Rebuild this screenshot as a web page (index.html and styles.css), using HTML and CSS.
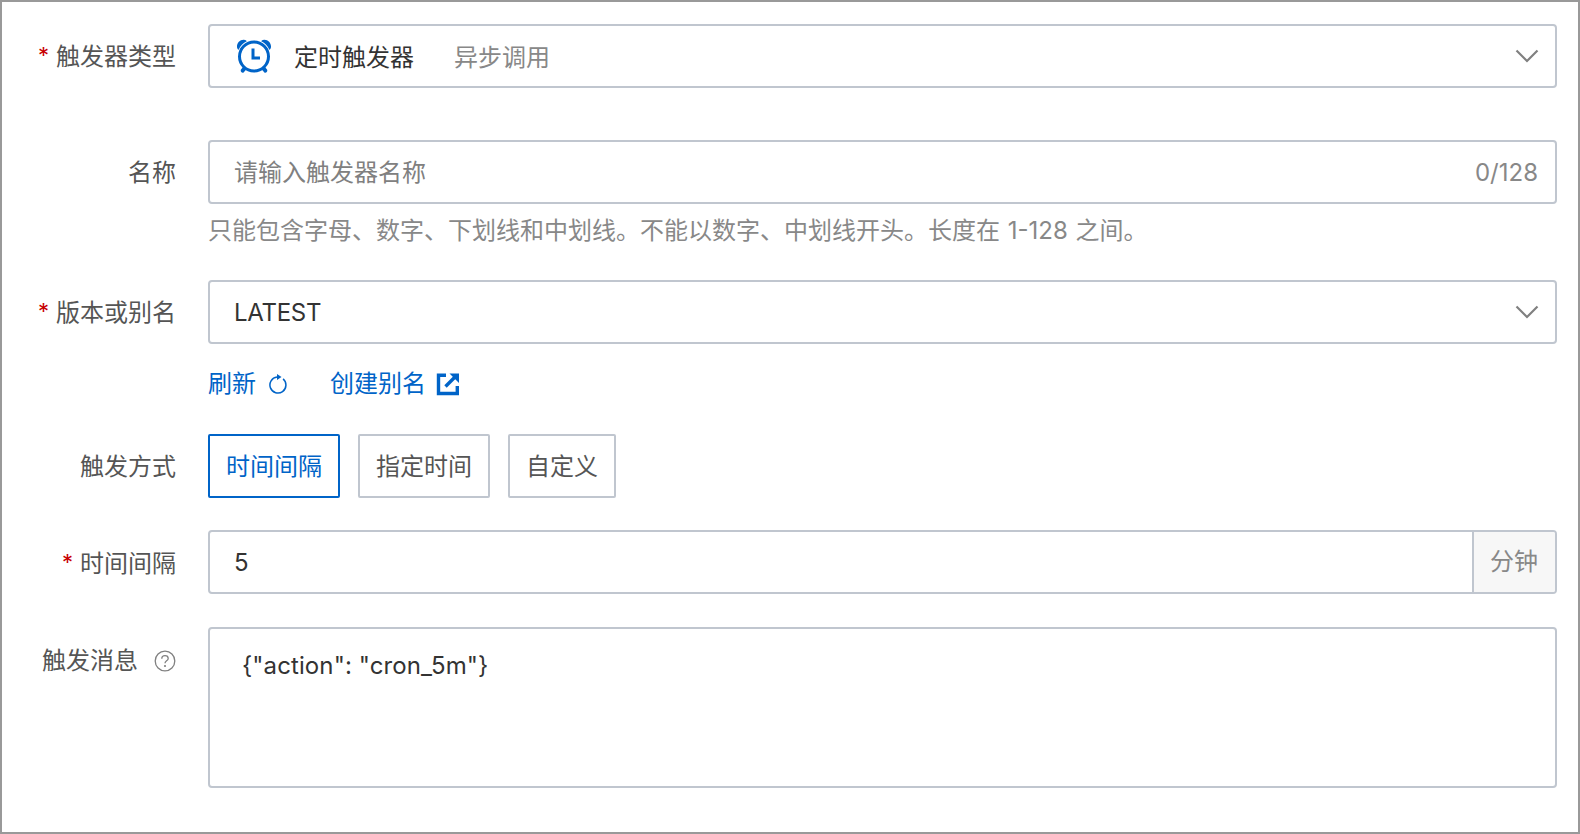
FILE: index.html
```html
<!DOCTYPE html>
<html lang="zh-CN">
<head>
<meta charset="utf-8">
<title>触发器</title>
<link rel="stylesheet" href="styles.css">
</head>
<body>
<form class="form">
  <div class="row row-type">
    <div class="label"><span class="req">*</span>触发器类型</div>
    <div class="field">
      <div class="control select">
        <svg class="clock" viewBox="0 0 36 36" width="36" height="36" aria-hidden="true">
          <path class="fill" d="M1 9C.7 5 4 1.500 8 1.800c1.400.1 2.400.8 2.800 1.500C7 5 4.200 7.800 2.700 11.800 1.800 11.400 1.100 10.400 1 9zM35 9C35.300 5 32 1.500 28 1.800c-1.400.1-2.400.8-2.800 1.500C29 5 31.800 7.800 33.300 11.800c.9-.4 1.600-1.400 1.700-2.800z"/>
          <circle class="ring" cx="18" cy="18.500" r="14.500"/>
          <path class="fill" d="M7 29l3 2.800-2.400 2.600c-.9.600-2 0-2.500-.7-.5-.8-.6-1.700.1-2.500zM29 29l-3 2.800 2.400 2.600c.9.600 2 0 2.500-.7.500-.8.600-1.700-.1-2.500z"/>
          <path class="hand" d="M17 10.500v9.500h7"/>
        </svg>
        <span class="opt-name">定时触发器</span>
        <span class="opt-tag">异步调用</span>
        <svg class="chevron" viewBox="0 0 24 14" width="24" height="14" aria-hidden="true"><path d="M1.500 1.500L12 12 22.500 1.500"/></svg>
      </div>
    </div>
  </div>

  <div class="row row-name">
    <div class="label">名称</div>
    <div class="field">
      <div class="control input">
        <span class="placeholder">请输入触发器名称</span>
        <span class="count">0/128</span>
      </div>
      <div class="help">只能包含字母、数字、下划线和中划线。不能以数字、中划线开头。长度在 1-128 之间。</div>
    </div>
  </div>

  <div class="row row-version">
    <div class="label"><span class="req">*</span>版本或别名</div>
    <div class="field">
      <div class="control select">
        <span class="value">LATEST</span>
        <svg class="chevron" viewBox="0 0 24 14" width="24" height="14" aria-hidden="true"><path d="M1.500 1.500L12 12 22.500 1.500"/></svg>
      </div>
      <div class="links">
        <a class="link">刷新
          <svg class="refresh" viewBox="0 0 18 20" width="18" height="20" aria-hidden="true">
            <path class="line" d="M14.100 4.900A8 8 0 1 1 8 3.060"/>
            <path class="solid" d="M8 0L12.500 3 8 6z"/>
          </svg>
        </a>
        <a class="link">创建别名
          <svg class="external" viewBox="0 0 24 24" width="24" height="24" aria-hidden="true">
            <path class="box" d="M10 3.200H2.500v18.300h18.800V14"/>
            <path class="box" d="M9.500 14.500L20 4"/>
            <path class="solid" d="M13.500 1.500H23v9.500z"/>
          </svg>
        </a>
      </div>
    </div>
  </div>

  <div class="row row-mode">
    <div class="label">触发方式</div>
    <div class="field tabs">
      <button type="button" class="tab tab-on">时间间隔</button>
      <button type="button" class="tab">指定时间</button>
      <button type="button" class="tab">自定义</button>
    </div>
  </div>

  <div class="row row-interval">
    <div class="label"><span class="req">*</span>时间间隔</div>
    <div class="field">
      <div class="control input">
        <span class="value">5</span>
        <span class="addon">分钟</span>
      </div>
    </div>
  </div>

  <div class="row">
    <div class="label label-msg">触发消息
      <svg class="help-icon" viewBox="0 0 22 22" width="22" height="22" aria-hidden="true">
        <circle cx="11" cy="11" r="9.800"/>
        <path d="M7.800 8.700c0-1.900 1.400-3.100 3.200-3.100s3.200 1.100 3.200 2.800c0 2.500-3.200 2.400-3.200 4.900"/>
        <circle class="dot" cx="11" cy="16" r="1.100"/>
      </svg>
    </div>
    <div class="field">
      <div class="control textarea">{"action": "cron_5m"}</div>
    </div>
  </div>
</form>
</body>
</html>
```

FILE: styles.css
```css
* { box-sizing: border-box; }
html, body { margin: 0; height: 100%; background: #fff; }
body { font-family: Inter, "Noto Sans CJK SC", sans-serif; font-size: 24px; color: #333; }

.form {
  height: 834px;
  border: 2px solid #999;
  padding: 22px 21px 0 0;
  display: flex;
  flex-direction: column;
}
.row { display: flex; align-items: flex-start; }
.row-type { margin-bottom: 52px; }
.row-name { margin-bottom: 32px; }
.row-version { margin-bottom: 33px; }
.row-mode { margin-bottom: 32px; }
.row-interval { margin-bottom: 33px; }

.label {
  width: 174px;
  flex: none;
  height: 64px;
  line-height: 66px;
  text-align: right;
  color: #555;
  white-space: nowrap;
}
.row-interval .label { line-height: 68px; }
.label-msg { display: flex; justify-content: flex-end; align-items: flex-start; line-height: 68px; gap: 16px; }
.req { color: #c80000; margin-right: 7px; font-size: 22px; position: relative; top: -2px; }
.field { margin-left: 32px; flex: 1; min-width: 0; }

.control {
  height: 64px;
  border: 2px solid #c0c6cf;
  border-radius: 4px;
  background: #fff;
  display: flex;
  align-items: center;
  padding-left: 24px;
  line-height: 1;
}
.select { padding-right: 16px; }
.input { padding-right: 17px; }
.clock { margin-left: 2px; margin-right: 22px; flex: none; }
.clock .fill { fill: #0064c8; }
.clock .ring { fill: none; stroke: #0064c8; stroke-width: 3; }
.clock .hand { fill: none; stroke: #0064c8; stroke-width: 3; }
.opt-name { color: #333; margin-top: 4px; }
.opt-tag { color: #888; margin-left: 40px; margin-top: 4px; }
.chevron { margin-left: auto; flex: none; }
.chevron path { fill: none; stroke: #808080; stroke-width: 2.200; }
.placeholder { color: #808080; margin-top: 2px; }
.count { margin-left: auto; color: #888; margin-top: 2px; }
.value { color: #333; margin-top: 2px; letter-spacing: -0.3px; }

.help { color: #888; line-height: 34px; margin-top: 10px; white-space: nowrap; word-spacing: 1px; }
.links { display: flex; gap: 43px; margin-top: 23px; line-height: 34px; }
.link { color: #0064c8; display: flex; align-items: center; gap: 13px; }
.link:last-child { gap: 10px; }
.refresh .line { fill: none; stroke: #0064c8; stroke-width: 1.500; }
.refresh .solid { fill: #0064c8; }
.external .box { fill: none; stroke: #0064c8; stroke-width: 3.400; }
.external .solid { fill: #0064c8; }

.tabs { display: flex; gap: 18px; }
.tab {
  height: 64px;
  padding: 0 16px 3px;
  border: 2px solid #c0c6cf;
  border-radius: 2px;
  background: #fff;
  color: #555;
  font: inherit;
}
.tab-on { border-color: #0064c8; color: #0064c8; }

.row-interval .input { padding-right: 0; overflow: hidden; }
.addon {
  margin-left: auto;
  width: 83px;
  height: 100%;
  padding-right: 1px;
  background: #f7f7f7;
  border-left: 2px solid #c0c6cf;
  color: #888;
  display: flex;
  align-items: center;
  justify-content: center;
}

.help-icon { margin-top: 23px; flex: none; }
.help-icon circle, .help-icon path { fill: none; stroke: #808080; stroke-width: 1.300; }
.help-icon .dot { fill: #808080; stroke: none; }

.textarea {
  height: 161px;
  align-items: flex-start;
  padding: 23px 0 0 32px;
  line-height: 28px;
  letter-spacing: 0.1px;
}
```
